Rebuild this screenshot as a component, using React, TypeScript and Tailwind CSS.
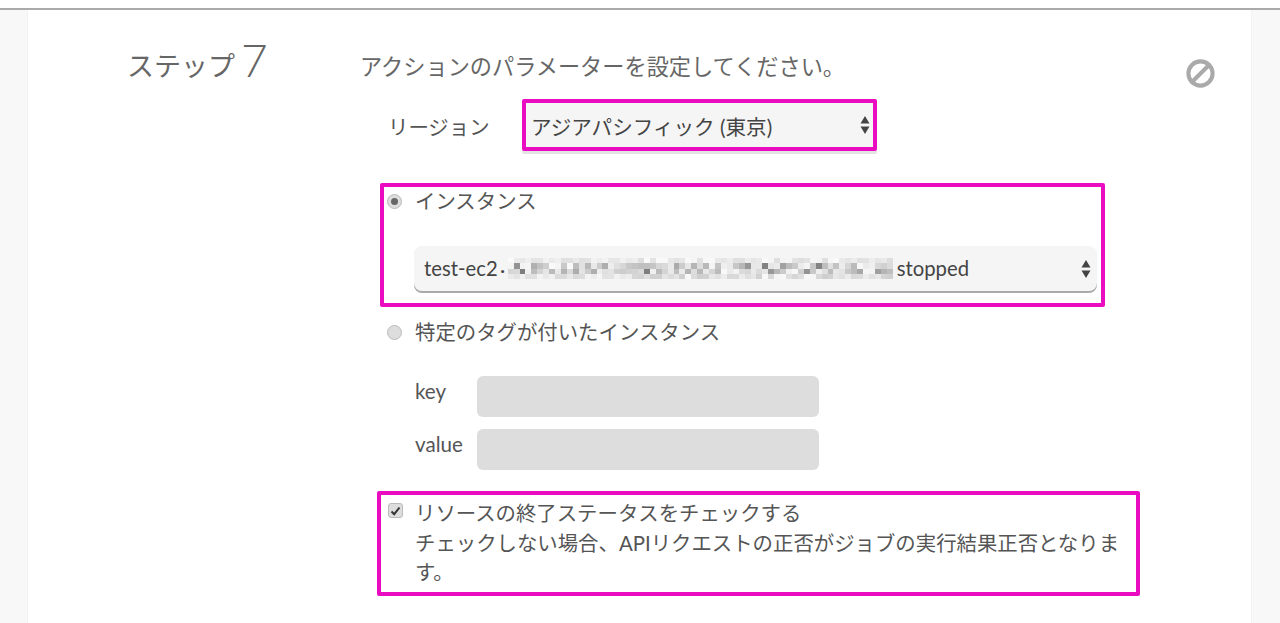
import { Ban } from "lucide-react";

const FONT = "font-['Lato','Noto_Sans_CJK_JP',sans-serif]";

// モザイク部分
const MOSAIC_W = 65;
const MOSAIC_H = 4;
const mosaicCells = Array.from({ length: MOSAIC_W * MOSAIC_H }, (_, i) => {
  const n = (i * 7919 + ((i * i) % 97) * 131) % 100;
  const row = Math.floor(i / MOSAIC_W);
  const strength = row === 0 ? 30 : row === 3 ? 45 : i % 3 === 0 ? 125 : 70;
  const v = 250 - Math.round((n / 100) * strength);
  return `rgb(${v},${v},${v})`;
});

function Mosaic() {
  return (
    <div className="mr-[4px] grid h-[21px] w-[385px] shrink-0 grid-cols-[repeat(65,1fr)] grid-rows-[repeat(4,5.25px)]">
      {mosaicCells.map((c, i) => (
        <div key={i} style={{ backgroundColor: c }} />
      ))}
    </div>
  );
}

function Arrows() {
  return (
    <svg width="10" height="20" viewBox="0 0 10 20" className="shrink-0">
      <path d="M5 1 L9.5 8.5 H0.5 Z M0.5 11.5 H9.5 L5 19 Z" fill="#444" />
    </svg>
  );
}

function Radio({ checked }: { checked?: boolean }) {
  return (
    <span className="flex h-[15px] w-[15px] shrink-0 items-center justify-center rounded-full border border-[#bbb] bg-[#ddd]">
      {checked && <span className="h-[7px] w-[7px] rounded-full bg-[#666]" />}
    </span>
  );
}

export default function App() {
  return (
    <div className={`flex h-[623px] w-[1280px] flex-col overflow-hidden bg-white text-[#555] ${FONT}`}>
      <div className="h-[10px] shrink-0 border-b-2 border-[#aaa] bg-white" />
      <div className="flex min-h-0 flex-1 bg-[#f8f8f8] pl-[27px] pr-[28px]">
        <div className="relative flex flex-1 border-x border-[#f2f2f2] bg-white">
          <div className="flex h-[76px] w-[332px] shrink-0 items-end pl-[99px]">
            <span className="text-[27px] leading-[40px] text-[#666]">ステップ</span>
            <span className="ml-[6px] font-['Lato'] text-[46px] font-light leading-[52px] text-[#666]">7</span>
          </div>

          <div className="flex min-w-0 flex-col">
            <p className="pt-[42px] text-[22.2px] leading-[30px] text-[#666]">アクションのパラメーターを設定してください。</p>

            <div className="mt-[17px] flex items-center pl-[28px]">
              <span className="w-[134px] pt-[3px] text-[20.4px] leading-[30px]">リージョン</span>
              <div className="h-[52px] w-[355px] rounded-[2px] border-4 border-[#e90cc0] shadow-[0_3px_0_#e4e4e4]">
                <div className="flex h-full items-center justify-between bg-[#f5f5f5] pl-[5px] pr-[3px]">
                  <span className="pt-[3px] text-[20.6px] leading-[28px] text-[#444]">アジアパシフィック (東京)</span>
                  <Arrows />
                </div>
              </div>
            </div>

            <div className="ml-[20px] mt-[32px] h-[124px] w-[725px] rounded-[2px] border-4 border-[#e90cc0] pl-[3px]">
              <label className="flex h-[28px] items-center gap-[5px]">
                <Radio checked />
                <span className="ml-[8px] text-[20.4px] leading-[28px]">インスタンス</span>
              </label>
              <div className="ml-[27px] mt-[31px] flex h-[45px] w-[683px] items-center rounded-[8px] bg-[#f5f5f5] pl-[10px] pr-[6px] shadow-[0_2px_0_#aaa]">
                <span className="font-['Lato'] text-[20.3px] text-[#444]">test-ec2</span>
                <span className="w-[10px] text-center font-['Lato'] text-[20px] text-[#444]">·</span>
                <Mosaic />
                <span className="font-['Lato'] text-[20.3px] text-[#444]">stopped</span>
                <div className="flex-1" />
                <Arrows />
              </div>
            </div>

            <label className="ml-[27px] mt-[11px] flex h-[28px] items-center gap-[13px]">
              <Radio />
              <span className="text-[20.4px] leading-[28px]">特定のタグが付いたインスタンス</span>
            </label>

            <div className="ml-[55px] mt-[30px] flex flex-col gap-[12px]">
              <div className="flex">
                <span className="w-[62px] pt-[1px] font-['Lato'] text-[20.6px] leading-[28px]">key</span>
                <div className="h-[41px] w-[342px] rounded-[6px] bg-[#ddd]" />
              </div>
              <div className="flex">
                <span className="w-[62px] pt-[1px] font-['Lato'] text-[20.6px] leading-[28px]">value</span>
                <div className="h-[41px] w-[342px] rounded-[6px] bg-[#ddd]" />
              </div>
            </div>

            <div className="ml-[17px] mt-[21px] flex h-[105px] w-[763px] rounded-[2px] border-4 border-[#e90cc0] pl-[7px] pt-[4px]">
              <span className="mt-[4px] flex h-[15px] w-[15px] shrink-0 items-center justify-center rounded-[3px] border border-[#bbb] bg-[#ddd]">
                <svg width="11" height="10" viewBox="0 0 11 10">
                  <path d="M1.5 5.5 L4.2 8.2 L9.5 1.5" fill="none" stroke="#333" strokeWidth="2" />
                </svg>
              </span>
              <p className="ml-[12px] text-[20.4px] leading-[29.5px]">
                リソースの終了ステータスをチェックする
                <br />
                チェックしない場合、APIリクエストの正否がジョブの実行結果正否となります。
              </p>
            </div>
          </div>

          <Ban className="absolute left-[1158px] top-[49px] -scale-x-100 text-[#aaa]" size={29} strokeWidth={3.4} />
        </div>
      </div>
    </div>
  );
}
